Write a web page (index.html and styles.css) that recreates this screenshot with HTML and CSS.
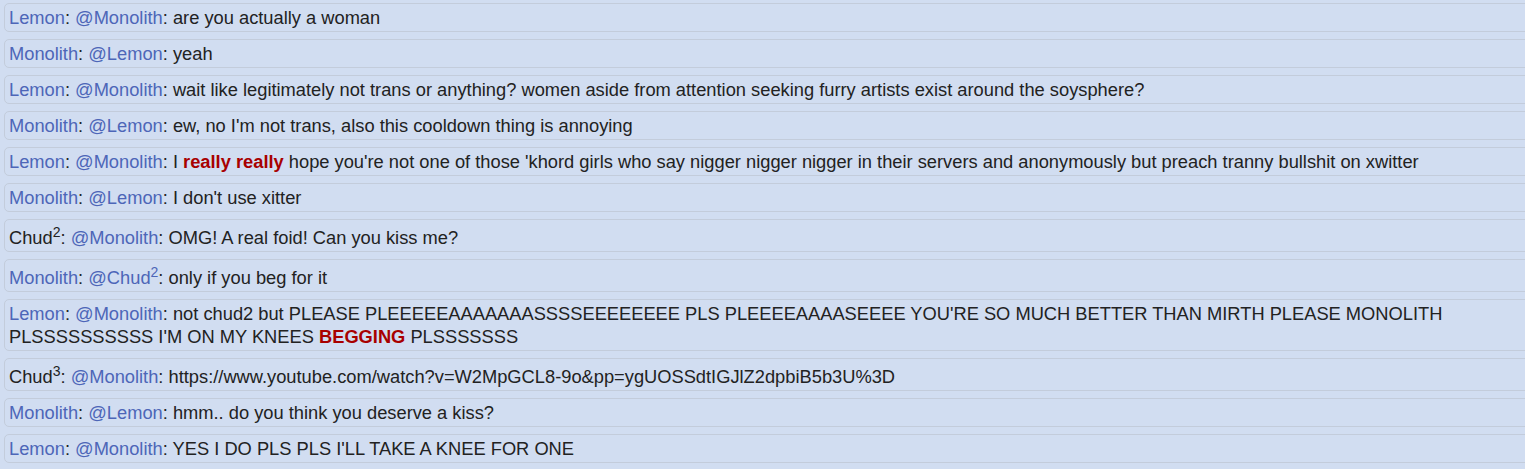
FILE: index.html
```html
<!DOCTYPE html>
<html lang="en">
<head>
    <meta charset="utf-8">
    <title>Chat</title>
    <link rel="stylesheet" href="styles.css">
</head>
<body>
    <div class="chat">
        <div class="msg"><span class="name">Lemon</span>: <span class="name">@Monolith</span>: are you actually a woman</div>
        <div class="msg"><span class="name">Monolith</span>: <span class="name">@Lemon</span>: yeah</div>
        <div class="msg"><span class="name">Lemon</span>: <span class="name">@Monolith</span>: wait like legitimately not trans or anything? women aside from attention seeking furry artists exist around the soysphere?</div>
        <div class="msg"><span class="name">Monolith</span>: <span class="name">@Lemon</span>: ew, no I'm not trans, also this cooldown thing is annoying</div>
        <div class="msg"><span class="name">Lemon</span>: <span class="name">@Monolith</span>: I <b class="red">really really</b> hope you're not one of those 'khord girls who say nigger nigger nigger in their servers and anonymously but preach tranny bullshit on xwitter</div>
        <div class="msg"><span class="name">Monolith</span>: <span class="name">@Lemon</span>: I don't use xitter</div>
        <div class="msg">Chud<sup>2</sup>: <span class="name">@Monolith</span>: OMG! A real foid! Can you kiss me?</div>
        <div class="msg"><span class="name">Monolith</span>: <span class="name">@Chud<sup>2</sup></span>: only if you beg for it</div>
        <div class="msg"><span class="name">Lemon</span>: <span class="name">@Monolith</span>: not chud2 but PLEASE PLEEEEEAAAAAAASSSSEEEEEEEE PLS PLEEEEAAAASEEEE YOU'RE SO MUCH BETTER THAN MIRTH PLEASE MONOLITH PLSSSSSSSSSS I'M ON MY KNEES <b class="red">BEGGING</b> PLSSSSSSS</div>
        <div class="msg">Chud<sup>3</sup>: <span class="name">@Monolith</span>: https://www.youtube.com/watch?v=W2MpGCL8-9o&amp;pp=ygUOSSdtIGJlZ2dpbiB5b3U%3D</div>
        <div class="msg"><span class="name">Monolith</span>: <span class="name">@Lemon</span>: hmm.. do you think you deserve a kiss?</div>
        <div class="msg"><span class="name">Lemon</span>: <span class="name">@Monolith</span>: YES I DO PLS PLS I'LL TAKE A KNEE FOR ONE</div>
    </div>
</body>
</html>
```

FILE: styles.css
```css
body {
    margin: 0;
    padding: 3px 0 0 4px;
    background: #d1ddf1;
    font-family: "Liberation Sans", Arial, sans-serif;
    font-size: 18.3px;
    color: #222;
    overflow: hidden;
}

.chat {
    display: flex;
    flex-direction: column;
    gap: 7px;
    margin-right: -12px;
}

.msg {
    padding: 2px 4px;
    line-height: 23px;
    border: 1px solid #c3ccdb;
    border-radius: 5px;
}

.name {
    color: #4d66b8;
}

.red {
    color: #a80000;
}

sup {
    font-size: 14px;
    line-height: 20px;
}
```
